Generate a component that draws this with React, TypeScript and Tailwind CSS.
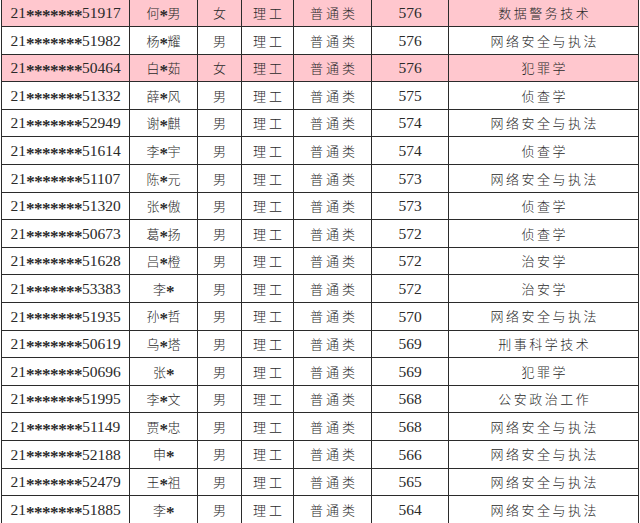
import React from 'react';

type Row = {
  id: string;
  name: string;
  sex: string;
  score: string;
  major: string;
  pink?: boolean;
};

const rows: Row[] = [
  { id: '51917', name: '何*男', sex: '女', score: '576', major: '数据警务技术', pink: true },
  { id: '51982', name: '杨*耀', sex: '男', score: '576', major: '网络安全与执法' },
  { id: '50464', name: '白*茹', sex: '女', score: '576', major: '犯罪学', pink: true },
  { id: '51332', name: '薛*风', sex: '男', score: '575', major: '侦查学' },
  { id: '52949', name: '谢*麒', sex: '男', score: '574', major: '网络安全与执法' },
  { id: '51614', name: '李*宇', sex: '男', score: '574', major: '侦查学' },
  { id: '51107', name: '陈*元', sex: '男', score: '573', major: '网络安全与执法' },
  { id: '51320', name: '张*傲', sex: '男', score: '573', major: '侦查学' },
  { id: '50673', name: '葛*扬', sex: '男', score: '572', major: '侦查学' },
  { id: '51628', name: '吕*橙', sex: '男', score: '572', major: '治安学' },
  { id: '53383', name: '李*', sex: '男', score: '572', major: '治安学' },
  { id: '51935', name: '孙*哲', sex: '男', score: '570', major: '网络安全与执法' },
  { id: '50619', name: '乌*塔', sex: '男', score: '569', major: '刑事科学技术' },
  { id: '50696', name: '张*', sex: '男', score: '569', major: '犯罪学' },
  { id: '51995', name: '李*文', sex: '男', score: '568', major: '公安政治工作' },
  { id: '51149', name: '贾*忠', sex: '男', score: '568', major: '网络安全与执法' },
  { id: '52188', name: '申*', sex: '男', score: '566', major: '网络安全与执法' },
  { id: '52479', name: '王*祖', sex: '男', score: '565', major: '网络安全与执法' },
  { id: '51885', name: '李*', sex: '男', score: '564', major: '网络安全与执法' },
];

const serif = "font-['Liberation_Serif','Times_New_Roman',serif]";
const cjk = "font-['Noto_Sans_CJK_SC',sans-serif]";

// 宋体的星号偏大且居中，这里加粗放大再往下挪
const Stars = ({ text }: { text: string }) => (
  <span className="inline-block translate-y-[3px] text-[17px] font-bold tracking-[-0.5px]">{text}</span>
);

const NameCell = ({ name }: { name: string }) => {
  const [a, b] = name.split('*');
  return (
    <>
      <span className={cjk}>{a}</span>
      <span className={serif}>
        <Stars text="*" />
      </span>
      <span className={cjk}>{b}</span>
    </>
  );
};

const cell = 'flex items-center justify-center border-r border-[#2b2b2b] h-full';

export default function App() {
  return (
    <div className="w-[640px] h-[523px] overflow-hidden bg-white text-[#2a2a2a]">
      <div className="ml-[1px] w-[638px] border-l border-[#2b2b2b]">
        {rows.map((r, i) => (
          <div
            key={r.id + i}
            className={`flex border-b border-[#2b2b2b] ${i === 0 ? 'h-[27px]' : 'h-[27.6px]'} ${
              r.pink ? 'bg-[#ffc7ce]' : 'bg-white'
            }`}
          >
            <div className={`${cell} w-[128px] ${serif} text-[15.5px]`}>
              21<Stars text="*******" />
              {r.id}
            </div>
            <div className={`${cell} w-[68px] text-[13px] font-light`}>
              <NameCell name={r.name} />
            </div>
            <div className={`${cell} w-[44px] ${cjk} text-[13px] font-light`}>{r.sex}</div>
            <div className={`${cell} w-[52px] ${cjk} text-[13px] font-light tracking-[3px] pl-[3px]`}>
              理工
            </div>
            <div className={`${cell} w-[78px] ${cjk} text-[13px] font-light tracking-[3px] pl-[3px]`}>
              普通类
            </div>
            <div className={`${cell} w-[77px] ${serif} text-[15.5px]`}>{r.score}</div>
            <div className={`${cell} w-[190px] ${cjk} text-[13px] font-light tracking-[2.5px] pl-[2.5px]`}>
              {r.major}
            </div>
          </div>
        ))}
      </div>
    </div>
  );
}
